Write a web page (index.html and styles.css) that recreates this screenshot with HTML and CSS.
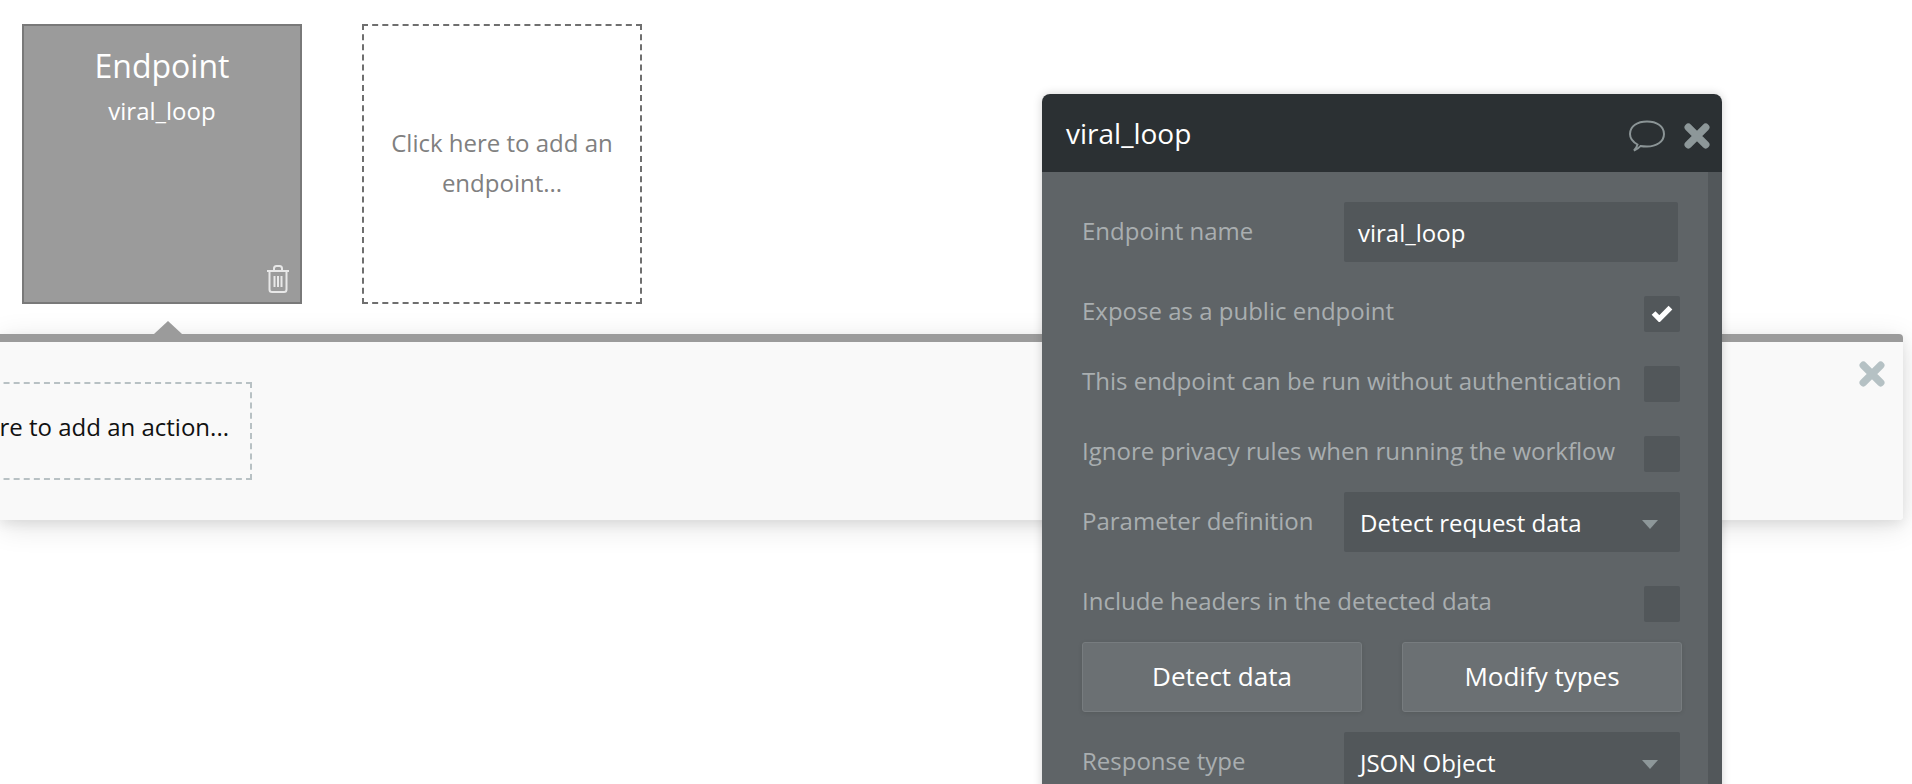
FILE: index.html
```html
<!DOCTYPE html>
<html lang="en">
<head>
<meta charset="utf-8">
<title>viral_loop</title>
<link rel="stylesheet" href="styles.css">
</head>
<body>
<main class="canvas">
  <section class="cards">
    <div class="card card-active">
      <div class="card-title">Endpoint</div>
      <div class="card-sub">viral_loop</div>
      <svg class="trash" viewBox="0 0 24 28" width="24" height="28" fill="none" stroke="#e8e8e8" stroke-width="2">
        <path d="M1 6h22"/>
        <path d="M8 6V3.500C8 2 9 1 10.500 1h3C15 1 16 2 16 3.500V6"/>
        <path d="M3.500 6v18.500c0 1.500 1 2.500 2.500 2.500h12c1.500 0 2.500-1 2.500-2.500V6"/>
        <path d="M8.500 11v11M12 11v11M15.500 11v11"/>
      </svg>
    </div>
    <div class="card card-add">Click here to add an endpoint...</div>
  </section>

  <section class="flow">
    <div class="flow-bar"></div>
    <div class="flow-body">
      <div class="action-add">Click here to add an action...</div>
      <svg class="flow-close" viewBox="0 0 24 24" width="26" height="26"><path d="M4 4L20 20M20 4L4 20" stroke="#b5c1c4" stroke-width="7" stroke-linecap="round"/></svg>
    </div>
  </section>
</main>

<aside class="editor">
  <header class="editor-head">
    <span class="editor-name">viral_loop</span>
    <svg class="bubble" viewBox="0 0 36 32" width="36" height="32" fill="none" stroke="#8b9496" stroke-width="2"><path d="M5 30.500c2.500-1 5-2.500 6.500-4.500 1.500.3 4 .5 6.500.5 9 0 17-4.500 17-12.500S27.500 1.500 18 1.500 1 6 1 14c0 4.500 3 8 7.500 10.500-.5 2.200-2 4.500-3.500 6z"/></svg>
    <svg class="head-close" viewBox="0 0 24 24" width="26" height="26"><path d="M4 4L20 20M20 4L4 20" stroke="#8d9799" stroke-width="7" stroke-linecap="round"/></svg>
  </header>
  <div class="editor-body">
    <div class="row row-first">
      <label class="label">Endpoint name</label>
      <div class="control input">viral_loop</div>
    </div>
    <div class="row row-check">
      <label class="label">Expose as a public endpoint</label>
      <div class="check"><svg class="tick" viewBox="0 0 22 17" width="24" height="18"><path d="M3 8.500L8.500 14L19 3.500" fill="none" stroke="#fff" stroke-width="5"/></svg></div>
    </div>
    <div class="row row-check">
      <label class="label">This endpoint can be run without authentication</label>
      <div class="check"></div>
    </div>
    <div class="row row-check">
      <label class="label">Ignore privacy rules when running the workflow</label>
      <div class="check"></div>
    </div>
    <div class="row row-control">
      <label class="label">Parameter definition</label>
      <div class="control select">Detect request data<span class="caret"></span></div>
    </div>
    <div class="row row-check">
      <label class="label">Include headers in the detected data</label>
      <div class="check"></div>
    </div>
    <div class="buttons">
      <button class="btn">Detect data</button>
      <button class="btn">Modify types</button>
    </div>
    <div class="row row-control">
      <label class="label">Response type</label>
      <div class="control select">JSON Object<span class="caret"></span></div>
    </div>
  </div>
</aside>
</body>
</html>
```
FILE: styles.css
```css
* { box-sizing: border-box; }
html, body { margin: 0; height: 784px; overflow: hidden; background: #fff; }
body { position: relative; font-family: "Open Sans", "Noto Sans", sans-serif; }

.canvas { width: 100%; }

.cards { display: flex; gap: 60px; padding: 24px 0 0 22px; }
.card { width: 280px; height: 280px; }
.card-active {
  position: relative;
  background: #9b9b9b;
  border: 2px solid #797979;
  color: #fff;
  text-align: center;
  padding-top: 19px;
}
.card-title { font-size: 32px; line-height: 42px; }
.card-sub { font-size: 24px; line-height: 30px; margin-top: 9px; }
.trash { position: absolute; right: 10px; bottom: 9px; }
.card-add {
  border: 2px dashed #6f6f6f;
  color: #808080;
  font-size: 24px;
  line-height: 40px;
  text-align: center;
  display: flex;
  align-items: center;
  padding: 0 20px 2px;
}

.flow {
  position: relative;
  width: 1903px;
  margin-top: 30px;
  height: 186px;
  box-shadow: 0 4px 12px rgba(0, 0, 0, .07), 0 6px 30px rgba(0, 0, 0, .12);
  border-radius: 0 4px 4px 0;
}
.flow::before {
  content: "";
  position: absolute;
  left: 154px;
  top: -13px;
  border-left: 14px solid transparent;
  border-right: 14px solid transparent;
  border-bottom: 13px solid #9b9b9b;
}
.flow-bar { height: 8px; background: #9b9b9b; border-radius: 0 4px 0 0; }
.flow-body {
  position: relative;
  height: 178px;
  background: #f9f9f9;
  padding-top: 40px;
  border-radius: 0 0 4px 0;
}
.action-add {
  width: 400px;
  height: 98px;
  margin-left: -148px;
  border: 2px dashed #b8c1c4;
  color: #111;
  font-size: 24px;
  display: flex;
  align-items: center;
  justify-content: flex-end;
  padding: 0 21px 9px 0;
}
.flow-close { position: absolute; right: 18px; top: 19px; }

.editor {
  position: absolute;
  left: 1042px;
  top: 94px;
  width: 680px;
  height: 760px;
  border-radius: 8px 8px 0 0;
  box-shadow: 0 0 10px rgba(0, 0, 0, .18);
  overflow: hidden;
}
.editor-head {
  height: 78px;
  background: #2b3033;
  color: #fff;
  display: flex;
  align-items: center;
  padding: 0 12px 0 24px;
}
.editor-name { font-size: 28px; flex: 1; }
.bubble { margin-right: 19px; margin-top: 6px; }
.head-close { margin-top: 6px; }

.editor-body {
  height: 682px;
  background: #5f6467;
  border-right: 14px solid #52575a;
  padding: 30px 28px 0 40px;
}
.row { display: flex; align-items: center; justify-content: space-between; }
.row-first { height: 60px; }
.row-check { height: 36px; margin-top: 34px; }
.row-check + .row-control { margin-top: 20px; }
.row-control { height: 60px; }
.buttons + .row-control { margin-top: 20px; }
.row-first + .row-check { margin-top: 34px; }

.label { font-size: 24px; color: #a9aeb0; }
.row-first .label { margin-top: -4px; }
.row-check .label { margin-top: -7px; }
.row-control .label { margin-top: -4px; }

.control {
  background: #52575a;
  color: #fff;
  font-size: 24px;
  height: 60px;
  border-radius: 2px;
  display: flex;
  align-items: center;
}
.input { width: 334px; margin-right: 2px; padding-left: 14px; }
.select { width: 336px; padding-left: 16px; position: relative; }
.caret {
  position: absolute;
  right: 22px;
  top: 28px;
  border-left: 8px solid transparent;
  border-right: 8px solid transparent;
  border-top: 9px solid #8d9799;
}

.check {
  width: 36px;
  height: 36px;
  background: #52575a;
  border-radius: 2px;
  display: flex;
  align-items: center;
  justify-content: center;
}
.tick { margin-top: -2px; }

.buttons { display: flex; gap: 40px; margin: 20px -2px 0 0; }
.btn {
  width: 280px;
  height: 70px;
  background: #6b7073;
  border: 1px solid #777c7f;
  border-radius: 3px;
  box-shadow: 0 1px 4px rgba(0, 0, 0, .1);
  color: #fff;
  font-family: inherit;
  font-size: 26px;
  padding: 0 0 2px;
}
```
